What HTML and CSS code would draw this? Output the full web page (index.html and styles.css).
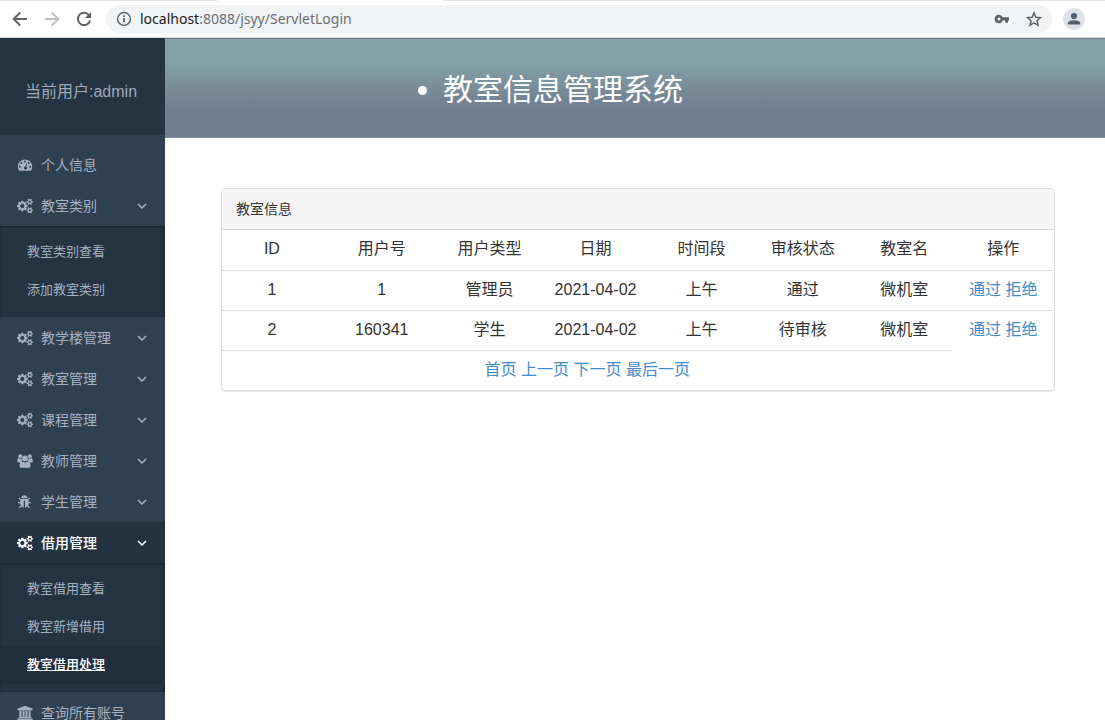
FILE: index.html
```html
<!DOCTYPE html>
<html lang="zh-CN">
<head>
<meta charset="utf-8">
<title>教室信息管理系统</title>
<link rel="stylesheet" href="styles.css">
</head>
<body>
<svg class="sprite" aria-hidden="true">
  <symbol id="cogs" viewBox="0 0 1920 1792"><path d="M896 896q0-106-75-181t-181-75-181 75-75 181 75 181 181 75 181-75 75-181zm768 512q0-52-38-90t-90-38-90 38-38 90q0 53 37.500 90.500t90.500 37.500 90.500-37.500 37.500-90.500zm0-1024q0-52-38-90t-90-38-90 38-38 90q0 53 37.500 90.500t90.500 37.500 90.500-37.500 37.500-90.500zm-384 421v185q0 10-7 19.500t-16 10.500l-155 24q-11 35-32 76 34 48 90 115 7 11 7 20 0 12-7 19-23 30-82.500 89.500t-78.500 59.500q-11 0-21-7l-115-90q-37 19-77 31-11 108-23 155-7 24-30 24h-186q-11 0-20-7.500t-10-17.500l-23-153q-34-10-75-31l-118 89q-7 7-20 7-11 0-21-8-144-133-144-160 0-9 7-19 10-14 41-53t47-61q-23-44-35-82l-152-24q-10-1-17-9.500t-7-19.500v-185q0-10 7-19.500t16-10.500l155-24q11-35 32-76-34-48-90-115-7-11-7-20 0-12 7-20 22-30 82-89t79-59q11 0 21 7l115 90q34-18 77-32 11-108 23-154 7-24 30-24h186q11 0 20 7.500t10 17.500l23 153q34 10 75 31l118-89q8-7 20-7 11 0 21 8 144 133 144 160 0 8-7 19-12 16-42 54t-45 60q23 48 34 82l152 23q10 2 17 10.500t7 19.500zm640 533v140q0 16-149 31-12 27-30 52 51 113 51 138 0 4-4 7-122 71-124 71-8 0-46-47t-52-68q-20 2-30 2t-30-2q-14 21-52 68t-46 47q-2 0-124-71-4-3-4-7 0-25 51-138-18-25-30-52-149-15-149-31v-140q0-16 149-31 13-29 30-52-51-113-51-138 0-4 4-7 4-2 35-20t59-34 30-16q8 0 46 46.500t52 67.500q20-2 30-2t30 2q51-71 92-112l6-2q4 0 124 70 4 3 4 7 0 25-51 138 17 23 30 52 149 15 149 31zm0-1024v140q0 16-149 31-12 27-30 52 51 113 51 138 0 4-4 7-122 71-124 71-8 0-46-47t-52-68q-20 2-30 2t-30-2q-14 21-52 68t-46 47q-2 0-124-71-4-3-4-7 0-25 51-138-18-25-30-52-149-15-149-31v-140q0-16 149-31 13-29 30-52-51-113-51-138 0-4 4-7 4-2 35-20t59-34 30-16q8 0 46 46.500t52 67.500q20-2 30-2t30 2q51-71 92-112l6-2q4 0 124 70 4 3 4 7 0 25-51 138 17 23 30 52 149 15 149 31z"/></symbol>
  <symbol id="dashboard" viewBox="0 0 16 16"><path fill-rule="evenodd" d="M8 2.500a7.200 7.200 0 0 0-7.200 7.200c0 1.400.4 2.700 1.100 3.800.1.200.3.300.5.300h11.200c.2 0 .4-.1.500-.3.700-1.100 1.100-2.400 1.100-3.800A7.200 7.200 0 0 0 8 2.500zM8 3.600a1 1 0 1 1 0 2 1 1 0 0 1 0-2zM4.400 5a1 1 0 1 1 0 2 1 1 0 0 1 0-2zM2.900 8.700a1 1 0 1 1 0 2 1 1 0 0 1 0-2zM13.100 8.700a1 1 0 1 1 0 2 1 1 0 0 1 0-2zM11.600 5a1 1 0 1 1 0 2 1 1 0 0 1 0-2zM9.400 6.300l.7.200-.8 3.100a1.600 1.600 0 1 1-.8-.2z"/></symbol>
  <symbol id="users" viewBox="0 0 16 16"><circle cx="3.200" cy="3.200" r="2"/><circle cx="12.800" cy="3.200" r="2"/><circle cx="8" cy="5.400" r="2.900"/><path d="M.3 8.800V7.500c0-1.500.5-2.400 1.500-2.400.8.600 1.700.7 2.800.3 0 1.400.4 2.300 1.100 3.100-1 0-1.900.4-2.400.9H1.600c-.8 0-1.300-.2-1.300-.6zM15.700 8.800V7.500c0-1.500-.5-2.400-1.500-2.400-.8.600-1.700.7-2.800.3 0 1.400-.4 2.300-1.100 3.100 1 0 1.900.4 2.400.9h1.700c.8 0 1.300-.2 1.300-.6zM5 8.700c1.800 1.100 4.200 1.100 6 0 1.700 0 2.500 1.500 2.500 4 0 1.300-.8 2.100-2 2.100h-7c-1.200 0-2-.8-2-2.100 0-2.500.8-4 2.500-4z"/></symbol>
  <symbol id="bug" viewBox="0 0 16 16"><path d="M4.400 4.200a3 3 0 0 1 6 0zM3.700 5h7.400l1.500-1.500.8.800-1.800 1.800v2h2.300v1.100h-2.300c0 .9-.2 1.700-.5 2.300l2 2-.8.800-1.800-1.800c-.7.700-1.500 1-2.500 1.100V6.500H6.800v7.100c-1-.1-1.800-.4-2.500-1.100l-1.800 1.800-.8-.8 2-2c-.3-.6-.5-1.400-.5-2.300H.9V8.100h2.300v-2L1.400 4.300l.8-.8z"/></symbol>
  <symbol id="bank" viewBox="0 0 16 16"><path d="M8 .8l7.700 3v1.100h-1.100v.6H1.400v-.6H.3V3.800zM2.400 6h2.100v6h1.100V6h2v6h.9V6h2v6h1.100V6h2v6h.4c.4 0 .6.200.6.600v.5H1.400v-.5c0-.4.2-.6.600-.6h.4zM.8 13.600h14.400c.3 0 .5.200.5.500v1.100H.3v-1.100c0-.3.200-.5.500-.5z"/></symbol>
  <symbol id="chevron" viewBox="0 0 10 10"><path d="M1 3l4 4 4-4" fill="none" stroke="currentColor" stroke-width="1.500"/></symbol>
</svg>

<div class="browser">
  <div class="tab-gap"></div>
  <div class="toolbar">
    <button class="tool" aria-label="后退"><svg viewBox="0 0 16 16"><path class="line" d="M15 8H2M8.200 1.500L1.700 8l6.500 6.500"/></svg></button>
    <button class="tool tool-off" aria-label="前进" disabled><svg viewBox="0 0 16 16"><path class="line" d="M1 8h13M7.800 1.500L14.300 8l-6.500 6.500"/></svg></button>
    <button class="tool" aria-label="刷新"><svg viewBox="0 0 16 16"><path class="line" d="M13.300 4.500A6.200 6.200 0 1 0 14.100 9.500"/><path d="M15 1v6H9z"/></svg></button>
    <div class="address">
      <svg class="info" viewBox="0 0 16 16"><circle class="line" cx="8" cy="8" r="6.400"/><path d="M7.100 7h1.800v4.500H7.100zM7.100 4.300h1.800v1.700H7.100z"/></svg>
      <div class="url"><span class="host">localhost</span>:8088/jsyy/ServletLogin</div>
      <button class="tool" aria-label="密码"><svg viewBox="0 0 16 16"><path fill-rule="evenodd" d="M5 3.800a4.200 4.200 0 1 0 3.800 5.700h2.400v2.300h2.800V9.500H15V6.300H8.800A4.200 4.200 0 0 0 5 3.800zM5 6.500a1.500 1.500 0 1 1 0 3 1.500 1.500 0 0 1 0-3z"/></svg></button>
      <button class="tool" aria-label="收藏"><svg viewBox="0 0 16 16"><path class="line thin" d="M8 1.900l1.800 4.300 4.700.4L11 9.700l1.100 4.600L8 11.900l-4.100 2.400L5 9.700 1.500 6.600l4.700-.4z"/></svg></button>
    </div>
    <button class="avatar" aria-label="用户"><svg viewBox="0 0 16 16"><circle cx="8" cy="5" r="3.100"/><path d="M1.800 13.500v-1.200C1.800 10 5.600 9.200 8 9.200s6.200.8 6.200 3.100v1.200z"/></svg></button>
  </div>
</div>

<div class="page">
  <aside class="sidebar">
    <div class="user">当前用户:admin</div>
    <nav class="menu">
      <a class="item" href="#"><svg class="icon"><use href="#dashboard"/></svg><span>个人信息</span></a>
      <button class="item"><svg class="icon"><use href="#cogs"/></svg><span>教室类别</span><svg class="arrow"><use href="#chevron"/></svg></button>
      <div class="submenu">
        <a href="#">教室类别查看</a>
        <a href="#">添加教室类别</a>
      </div>
      <button class="item"><svg class="icon"><use href="#cogs"/></svg><span>教学楼管理</span><svg class="arrow"><use href="#chevron"/></svg></button>
      <button class="item"><svg class="icon"><use href="#cogs"/></svg><span>教室管理</span><svg class="arrow"><use href="#chevron"/></svg></button>
      <button class="item"><svg class="icon"><use href="#cogs"/></svg><span>课程管理</span><svg class="arrow"><use href="#chevron"/></svg></button>
      <button class="item"><svg class="icon"><use href="#users"/></svg><span>教师管理</span><svg class="arrow"><use href="#chevron"/></svg></button>
      <button class="item"><svg class="icon"><use href="#bug"/></svg><span>学生管理</span><svg class="arrow"><use href="#chevron"/></svg></button>
      <button class="item item-active"><svg class="icon"><use href="#cogs"/></svg><span>借用管理</span><svg class="arrow"><use href="#chevron"/></svg></button>
      <div class="submenu">
        <a href="#">教室借用查看</a>
        <a href="#">教室新增借用</a>
        <a class="current" href="#">教室借用处理</a>
      </div>
      <a class="item" href="#"><svg class="icon"><use href="#bank"/></svg><span>查询所有账号</span></a>
    </nav>
  </aside>

  <div class="content">
    <header class="banner"><ul><li>教室信息管理系统</li></ul></header>
    <main class="main">
      <section class="panel">
        <h2 class="panel-title">教室信息</h2>
        <table class="table">
          <colgroup><col class="c-id"><col class="c-user"><col class="c-type"><col class="c-date"><col class="c-time"><col class="c-state"><col class="c-room"><col class="c-action"></colgroup>
          <thead>
            <tr><th>ID</th><th>用户号</th><th>用户类型</th><th>日期</th><th>时间段</th><th>审核状态</th><th>教室名</th><th>操作</th></tr>
          </thead>
          <tbody>
            <tr><td>1</td><td>1</td><td>管理员</td><td>2021-04-02</td><td>上午</td><td>通过</td><td>微机室</td><td><a href="#">通过</a> <a href="#">拒绝</a></td></tr>
            <tr><td>2</td><td>160341</td><td>学生</td><td>2021-04-02</td><td>上午</td><td>待审核</td><td>微机室</td><td><a href="#">通过</a> <a href="#">拒绝</a></td></tr>
            <tr><td colspan="7"><a href="#">首页</a> <a href="#">上一页</a> <a href="#">下一页</a> <a href="#">最后一页</a></td></tr>
          </tbody>
        </table>
      </section>
    </main>
  </div>
</div>
</body>
</html>
```
FILE: styles.css
```css
* { box-sizing: border-box; }

body {
  margin: 0;
  height: 100vh;
  display: flex;
  flex-direction: column;
  overflow: hidden;
  background: #fff;
  color: #333;
  font-family: "Liberation Sans", "Noto Sans CJK SC", sans-serif;
  font-size: 16px;
}

a { color: #428bca; text-decoration: none; }
button { margin: 0; padding: 0; border: 0; background: none; font: inherit; }
svg { fill: currentColor; flex: none; }
.sprite { display: none; }
.line { fill: none; stroke: currentColor; stroke-width: 2; }
svg.info .line, .thin { stroke-width: 1.5; }

/* Browser bar */
.browser { flex: none; border-bottom: 1px solid #d5d7dc; }
.tab-gap { height: 1px; background: linear-gradient(90deg, #dee1e6 217px, #fff 217px, #fff 443px, #dee1e6 443px); }
.toolbar {
  display: flex;
  align-items: center;
  height: 36px;
  padding: 0 20px 0 12px;
  gap: 16px;
  color: #5f6368;
}
.tool { display: flex; color: #5f6368; }
.tool svg, .info { width: 16px; height: 16px; }
.tool-off { color: #bdc1c6; }
.address {
  flex: 1;
  display: flex;
  align-items: center;
  gap: 16px;
  height: 28px;
  margin: 0 -5px 0 -2px;
  padding: 0 10px;
  border-radius: 14px;
  background: #f1f3f4;
}
.url { flex: 1; margin-left: -8px; font: 14px/20px "Noto Sans", sans-serif; color: #6b6f74; }
.host { color: #202124; }
.avatar {
  display: flex;
  align-items: center;
  justify-content: center;
  width: 22px;
  height: 22px;
  border-radius: 50%;
  background: #dee1e6;
  color: #525d72;
}
.avatar svg { width: 16px; height: 16px; }

/* Page */
.page { flex: 1; min-height: 0; display: flex; }

.sidebar { flex: none; width: 165px; overflow: hidden; background: #2f4050; color: #a7b1c2; }
.user { padding: 42px 25px 31px; line-height: 24px; background: #243443; color: #9ea8ba; }
.menu { padding-top: 9px; font-size: 14px; }
.item {
  display: flex;
  align-items: center;
  width: 100%;
  height: 41px;
  padding: 0 18px 0 17px;
  gap: 8px;
  color: #a7b1c2;
  text-align: left;
}
.item span { padding-bottom: 2px; }
.icon { width: 16px; height: 16px; }
.arrow { width: 10px; height: 10px; margin-left: auto; }
.item-active { background: #243342; color: #fff; font-weight: 500; }
.submenu {
  padding: 7px 0 8px;
  background: #243443;
  box-shadow: inset 0 1px 2px #17232f, inset -1px 0 2px #1d2b38;
  font-size: 13px;
}
.submenu a { display: block; padding-left: 27px; line-height: 38px; color: #a7b1c2; }
.submenu .current { background: #202f3d; color: #fff; font-weight: 500; text-decoration: underline; }

.content { flex: 1; min-width: 0; }
.banner {
  height: 100px;
  border-top: 1px solid #717c8f;
  border-bottom: 1px solid #83949f;
  background: linear-gradient(#83a2a7 22%, #717c8f 72%);
  color: #fff;
}
.banner ul { margin: 0; padding: 28px 0 0 278px; font-size: 30px; line-height: 46px; }
.main { padding: 50px 50px 50px 56px; }

.panel { overflow: hidden; border: 1px solid #ddd; border-radius: 4px; box-shadow: 0 1px 1px #e8e8e8; }
.panel-title {
  margin: 0;
  padding: 10px 14px;
  border-bottom: 1px solid #ddd;
  background: #f5f5f5;
  font-size: 14px;
  font-weight: 400;
  line-height: 20px;
}
.table { width: 100%; table-layout: fixed; border-spacing: 0; text-align: center; }
.table th, .table td { padding: 7px 0 9px; border-top: 1px solid #ddd; line-height: 23px; font-weight: 400; }
.table th { border-top: 0; padding-bottom: 10px; }
.c-id { width: 12%; }
.c-user { width: 14.4%; }
.c-type { width: 11.5%; }
.c-date { width: 14%; }
.c-time { width: 11.5%; }
.c-state { width: 12.8%; }
.c-room { width: 11.6%; }
.c-action { width: 12.2%; }
```
